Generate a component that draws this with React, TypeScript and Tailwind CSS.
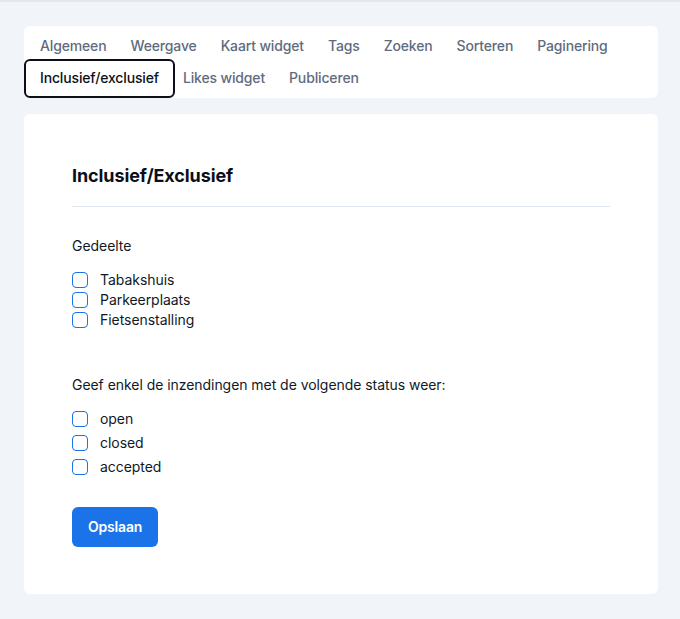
import { useState } from "react";

const tabs = [
  "Algemeen",
  "Weergave",
  "Kaart widget",
  "Tags",
  "Zoeken",
  "Sorteren",
  "Paginering",
  "Inclusief/exclusief",
  "Likes widget",
  "Publiceren",
];

const areas = ["Tabakshuis", "Parkeerplaats", "Fietsenstalling"];
const statuses = ["open", "closed", "accepted"];

function Check({ label, checked, onToggle }: { label: string; checked: boolean; onToggle: () => void }) {
  return (
    <label className="flex items-center gap-3 h-5 cursor-pointer select-none text-sm text-[#111827]">
      <span
        onClick={onToggle}
        className={
          "w-4 h-4 rounded-[4px] border border-[#1a73e8] flex items-center justify-center " +
          (checked ? "bg-[#1a73e8]" : "bg-white")
        }
      >
        {checked && (
          <svg viewBox="0 0 16 16" className="w-3 h-3" fill="none" stroke="white" strokeWidth="2.5">
            <path d="M3 8.5l3 3 7-7" />
          </svg>
        )}
      </span>
      <span>{label}</span>
    </label>
  );
}

export default function App() {
  const [active, setActive] = useState("Inclusief/exclusief");
  const [picked, setPicked] = useState<string[]>([]);

  const toggle = (key: string) =>
    setPicked((p) => (p.includes(key) ? p.filter((k) => k !== key) : [...p, key]));

  return (
    <main
      className="min-h-[619px] bg-[#f1f4f9] border-t-2 border-[#e4e7ec] pt-6 pb-6 pl-6 tracking-[-0.05px]"
      style={{ fontFamily: "Inter, 'Noto Sans', sans-serif" }}
    >
      <div className="w-[634px] flex flex-col gap-4">
        <nav className="bg-white rounded-md py-1 pl-2 pr-2 flex flex-wrap gap-x-2 tracking-[-0.15px]">
          {tabs.map((t) =>
            t === active ? (
              <button
                key={t}
                className="-mx-2 -my-[3.5px] px-[14px] py-[5.5px] leading-5 text-sm font-medium text-[#0b0f19] border-2 border-[#0b0f19] rounded-md"
              >
                {t}
              </button>
            ) : (
              <button
                key={t}
                onClick={() => setActive(t)}
                className="px-2 py-1.5 leading-5 text-sm font-medium text-[#5f6b7e]"
              >
                {t}
              </button>
            )
          )}
        </nav>

        <section className="bg-white rounded-md px-12 pt-12 pb-[47px]">
          <h2 className="text-lg leading-7 font-bold text-[#0b0f19] pb-4 border-b border-[#e2e8f0] tracking-[-0.1px]">
            Inclusief/Exclusief
          </h2>

          <p className="mt-[29px] text-sm leading-5 text-[#111827]">Gedeelte</p>
          <div className="mt-[14px] flex flex-col">
            {areas.map((a) => (
              <Check key={a} label={a} checked={picked.includes(a)} onToggle={() => toggle(a)} />
            ))}
          </div>

          <p className="mt-[45px] text-sm leading-5 text-[#111827]">
            Geef enkel de inzendingen met de volgende status weer:
          </p>
          <div className="mt-[14px] flex flex-col gap-1">
            {statuses.map((s) => (
              <Check key={s} label={s} checked={picked.includes(s)} onToggle={() => toggle(s)} />
            ))}
          </div>

          <button className="mt-[30px] h-10 px-4 rounded-md bg-[#1a73e8] text-white text-sm font-semibold tracking-[-0.2px]">
            Opslaan
          </button>
        </section>
      </div>
    </main>
  );
}
